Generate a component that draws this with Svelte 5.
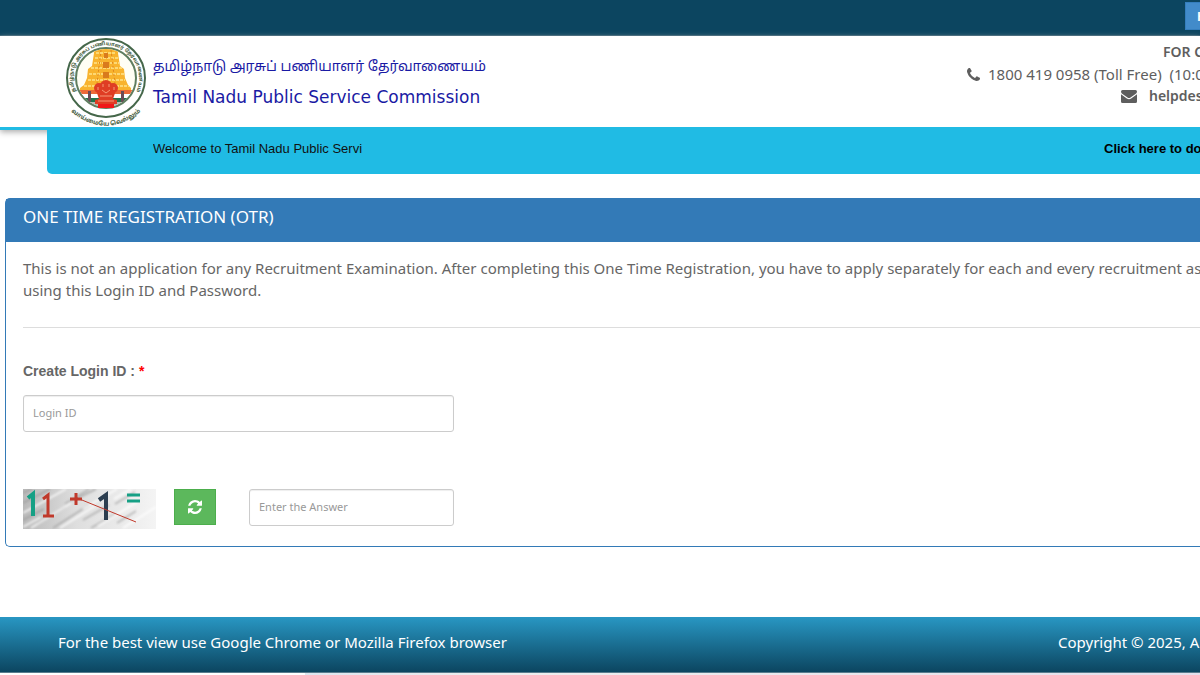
<script>
  let loginId = $state('');
  let answer = $state('');
</script>

<div class="page">
  <div class="topbar">
    <button class="home" type="button">H</button>
  </div>

  <header>
    <div class="brand">
      <svg class="emblem" viewBox="0 0 82 90" aria-hidden="true">
        <defs>
          <path id="ring-top" d="M14.500 62A33 33 0 1 1 67.500 62" />
          <path id="ring-bottom" d="M3 73Q41 106 79 73" />
          <clipPath id="disc"><circle cx="41" cy="42" r="29" /></clipPath>
        </defs>
        <circle cx="41" cy="42" r="39" fill="#fff" stroke="#45674a" stroke-width="2" />
        <circle cx="41" cy="42" r="30" fill="#fffef4" stroke="#5f7d5f" stroke-width="2" />
        <g clip-path="url(#disc)">
          <path d="M28 14l2-4 3 3 4-4 4 4 4-4 4 4 3-3 2 4-1 3 2 13 4 3 1 9 3 7 3 3v4H15v-4l4-3 3-7 1-9 4-3 2-13z" fill="#f8b32d" />
          <path d="M31 17h20M30 22h23M29 27h25M26 32h31M24 38h35M23 44h37M19 50h45" stroke="#fdd873" stroke-width="2" stroke-dasharray="3 1" />
          <path d="M36 14l-5 42M46 14l5 42" stroke="#df861c" stroke-width="1" stroke-dasharray="2 2" />
          <path d="M39 17h4v5h-4zM38 26h6v6h-6zM38 36h6v6h-6z" fill="#d97b1d" />
          <path d="M10 54h62v4H10z" fill="#ed6a38" />
          <path d="M10 58h62v4H10z" fill="#fff" />
          <path d="M10 62h62v4H10z" fill="#23734c" />
          <path d="M10 66h62v8H10z" fill="#b5b9b0" />
          <path d="M23 55h3v11h-3zM56 55h3v11h-3z" fill="#6b4b56" />
        </g>
        <g fill="#df3d24">
          <circle cx="41" cy="50" r="6" /><circle cx="34" cy="52" r="5" /><circle cx="48" cy="52" r="5" />
          <path d="M31 54h20l-3 9 4 1v4H30v-4l4-1z" />
          <path d="M33 68h16v4H33z" fill="#f01818" />
        </g>
        <path d="M38 48v3m6-3v3m-11 0v3m16-3v3m-12 0l4 3 4-3m-10 6h12m-14 5h16" fill="none" stroke="#f59a78" stroke-width="1" />
        <text class="ring-text"><textPath href="#ring-top" startOffset="50%">தமிழ்நாடு அரசுப் பணியாளர் தேர்வாணையம்</textPath></text>
        <text class="motto"><textPath href="#ring-bottom" startOffset="50%">வாய்மையே வெல்லும்</textPath></text>
      </svg>
      <div class="names">
        <div class="tamil" lang="ta">தமிழ்நாடு அரசுப் பணியாளர் தேர்வாணையம்</div>
        <div class="english">Tamil Nadu Public Service Commission</div>
      </div>
    </div>
    <div class="contact">
      <div class="line queries"><b>FOR C</b></div>
      <div class="line phone">
        <svg width="13" height="13" viewBox="0 0 1408 1408" aria-hidden="true"><path fill="currentColor" d="M1408 1112q0 27-10 70.500t-21 68.500q-21 50-122 106-94 51-186 51-27 0-53-3.500t-57.500-12.500-47-14.500T856 1357t-49-18q-98-35-175-83-127-79-264-216T152 776q-48-77-83-175-3-9-18-49t-20.500-55.500-14.500-47T3.500 392 0 339q0-92 51-186Q107 52 157 31q25-11 68.500-21T296 0q14 0 21 3 18 6 53 76 11 19 30 54t35 63.500 31 53.500q3 4 17.500 25t21.500 35.500 7 28.500q0 20-28.500 50t-62 55-62 53-28.500 46q0 9 5 22.500t8.500 20.500 14 24 11.500 19q76 137 174 235t235 174q2 1 19 11.500t24 14 20.500 8.500 22.500 5q18 0 46-28.500t53-62 55-62 50-28.500q14 0 28.500 7t35.500 21.500 25 17.500q25 15 53.500 31t63.500 35 54 30q70 35 76 53 3 7 3 21z" /></svg>
        <span>1800 419 0958 (Toll Free)&nbsp; (10:0</span>
      </div>
      <div class="line mail">
        <svg width="16" height="13" viewBox="0 0 16 13" aria-hidden="true"><path fill="currentColor" d="M1.500 0h13Q16 0 16 1.500 16 3 14.500 4L9.500 7.500Q8 8.700 6.500 7.500L1.500 4Q0 3 0 1.500 0 0 1.500 0zM0 4.200l5.800 4.200Q8 10 10.200 8.400L16 4.200v7.300Q16 13 14.500 13h-13Q0 13 0 11.500z" /></svg>
        <b>helpdes</b>
      </div>
    </div>
  </header>

  <div class="notice">
    <div class="ticker">Welcome to Tamil Nadu Public Servi</div>
    <a class="download" href="#download">Click here to do</a>
  </div>

  <main class="panel">
    <h1>ONE TIME REGISTRATION (OTR)</h1>
    <form class="body" onsubmit={(e) => e.preventDefault()}>
      <p>This is not an application for any Recruitment Examination. After completing this One Time Registration, you have to apply separately for each and every recruitment as<br />using this Login ID and Password.</p>
      <hr />
      <label for="login">Create Login ID : <span class="req">*</span></label>
      <input id="login" class="login" type="text" placeholder="Login ID" bind:value={loginId} />
      <div class="verify">
        <svg class="captcha" width="133" height="40" viewBox="0 0 133 40" role="img" aria-label="11 + 1 =">
          <defs>
            <linearGradient id="paper"><stop offset="0" stop-color="#b9b9b9" /><stop offset=".4" stop-color="#dedede" /><stop offset="1" stop-color="#f4f4f4" /></linearGradient>
            <filter id="grain"><feGaussianBlur stdDeviation="1" /></filter>
          </defs>
          <rect width="133" height="40" fill="url(#paper)" />
          <g filter="url(#grain)" fill="none" stroke-width="2">
            <path stroke="#999" opacity=".6" d="M0 14L27 0M0 31L21 20M14 35l28-17M42 15L66 0M30 39l36-23M60 31l26-15M55 9L73 0M68 39l24-14M92 15l20-12M0 4l9-4M94 34l19-12" />
            <path stroke="#fff" opacity=".8" d="M0 24L43 0M8 39l40-25M37 39l35-22M60 20L94 0M75 37l39-24M100 39l33-21M91 10l17-10M0 38l18-10" />
          </g>
          <g fill="none" stroke-width="4">
            <path stroke="#16a085" d="M5 9l5-4v22" />
            <path stroke="#c0392b" stroke-width="3" d="M20 10l5-4v20M20 27h11M47 10h12M53 4v12" />
            <path stroke="#2c3e50" d="M76 11l7-5v25" />
            <path stroke="#16a085" stroke-width="3" d="M104 6h13M104 12h13" />
            <path stroke="#c0392b" stroke-width="1" d="M54 9l59 24" />
          </g>
        </svg>
        <button class="refresh" type="button" aria-label="Refresh">
          <svg width="14" height="14" viewBox="0 0 1536 1536" aria-hidden="true"><path fill="currentColor" d="M1511 928q0 5-1 7-64 268-268 434.500T764 1536q-146 0-282.500-55T238 1324l-129 129q-19 19-45 19t-45-19-19-45V960q0-26 19-45t45-19h448q26 0 45 19t19 45-19 45l-137 137q71 66 161 102t187 36q134 0 250-65t186-179q11-17 53-117 8-23 30-23h192q13 0 22.500 9.500t9.500 22.500zm25-800v448q0 26-19 45t-45 19h-448q-26 0-45-19t-19-45 19-45l138-138Q969 256 768 256q-134 0-250 65T332 500q-11 17-53 117-8 23-30 23H50q-13 0-22.500-9.500T18 608v-7q65-268 270-434.500T768 0q146 0 284 55.500T1297 212l130-129q19-19 45-19t45 19 19 45z" /></svg>
        </button>
        <input class="answer" type="text" aria-label="Enter the Answer" placeholder="Enter the Answer" bind:value={answer} />
      </div>
    </form>
  </main>

  <footer>
    <span>For the best view use Google Chrome or Mozilla Firefox browser</span>
    <span class="copy">Copyright © 2025, Al</span>
  </footer>
  <div class="base"></div>
</div>

<style>
  :global(body) { margin: 0; background: #fff; }
  * { box-sizing: border-box; }
  .page { overflow: hidden; color: #666; font: 14px/22px "Noto Sans", sans-serif; }
  .topbar { display: flex; justify-content: flex-end; height: 36px; padding-top: 2px; background: #0c4560; border-bottom: 1px solid #335f74; }
  .home { width: 15px; height: 28px; padding: 0 0 0 11px; overflow: hidden; border: 1px solid #357ebd; border-right: 0; background: #428bca; color: #fff; font: bold 12px "Noto Sans", sans-serif; text-align: left; }
  header { display: flex; justify-content: space-between; height: 94px; padding-left: 65px; border-bottom: 3px solid #20bbe4; box-shadow: 0 2px 6px #aaa; }
  .brand { display: flex; gap: 6px; }
  .emblem { width: 82px; height: 90px; }
  .ring-text { font: bold 5px "Noto Sans Tamil", "Noto Sans", sans-serif; fill: #3f5a3a; text-anchor: middle; }
  .motto { font: bold 6px "Noto Sans Tamil", "Noto Sans", sans-serif; fill: #3f5a3a; text-anchor: middle; }
  .names { padding-top: 17px; color: #1a1aa4; white-space: nowrap; }
  .tamil { font: 14px/30px "Noto Sans Tamil", "Noto Sans", sans-serif; }
  .english { font: 17px/28px "DejaVu Sans", sans-serif; }
  .contact { flex: 0 0 233px; padding-top: 5px; font-size: 15px; color: #5e5e5e; white-space: nowrap; overflow: hidden; }
  .line { display: flex; align-items: center; height: 22px; }
  .queries { padding-left: 196px; font-size: 14px; }
  .phone { gap: 8px; }
  .mail { gap: 12px; padding-left: 154px; font-size: 14px; }
  .line b { font-weight: 600; }
  .line svg { flex: none; }
  .notice { position: relative; display: flex; justify-content: space-between; height: 46px; margin: -2px 0 0 47px; padding-left: 106px; border-radius: 0 0 0 5px; background: #20bbe4; color: #111; font: 13px/42px "Liberation Sans", sans-serif; white-space: nowrap; }
  .ticker { width: 217px; overflow: hidden; }
  .download { width: 96px; overflow: hidden; color: #000; font-weight: bold; text-decoration: none; }
  .panel { margin: 24px 0 0 5px; border: 1px solid #337ab7; border-right: 0; border-radius: 5px 0 0 5px; }
  h1 { height: 43px; margin: 0; padding-left: 17px; background: #337ab7; color: #fff; font: 17px/36px "Noto Sans", sans-serif; }
  .body { padding: 15px 0 17px 17px; }
  p { margin: 0; font-size: 15px; white-space: nowrap; }
  hr { margin: 26px 0 32px; border: 0; border-top: 1px solid #ddd; }
  label { display: block; font: bold 14px/22px "Liberation Sans", sans-serif; }
  .req { color: red; }
  input { display: block; height: 37px; padding: 0 9px 2px; border: 1px solid #ccc; border-radius: 3px; background: #fff; box-shadow: inset 0 1px 1px #eee; font: 11px "Noto Sans", sans-serif; color: #555; }
  input::placeholder { color: #999; opacity: 1; }
  .login { width: 431px; margin-top: 13px; }
  .verify { display: flex; align-items: flex-start; margin-top: 57px; height: 40px; }
  .refresh { display: grid; place-items: center; width: 42px; height: 36px; margin: 0 33px 0 18px; padding: 0; border: 1px solid #4cae4c; background: #5cb85c; color: #fff; }
  .answer { width: 205px; }
  footer { display: flex; justify-content: space-between; height: 56px; margin-top: 70px; padding-left: 58px; background: linear-gradient(#2897c3, #0c4560); border-bottom: 1px solid #587d8e; color: #fff; font-size: 15px; line-height: 51px; white-space: nowrap; }
  .copy { width: 142px; overflow: hidden; }
  .base { height: 2px; background: linear-gradient(90deg, #fff 0 305px, #dde6ef 305px, #eee 500px, #e4e0ec); }
</style>
